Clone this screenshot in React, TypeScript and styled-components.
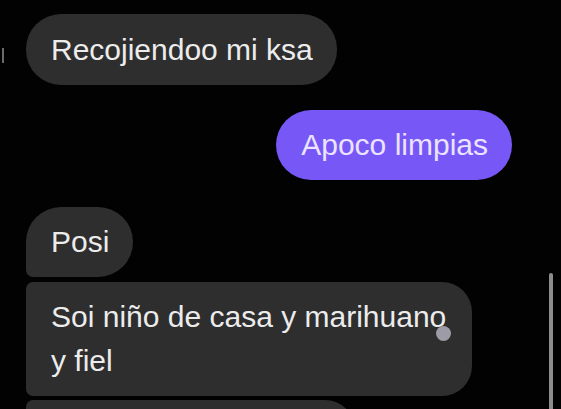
import React from "react";
import styled, { createGlobalStyle } from "styled-components";

const Global = createGlobalStyle`
  html, body { margin: 0; padding: 0; background: #000; }
  body { width: 561px; height: 409px; overflow: hidden; }
`;

const Screen = styled.div`
  position: relative;
  width: 561px;
  height: 409px;
  overflow: hidden;
  background: #020202;
  font-family: "Liberation Sans", Arial, sans-serif;
`;

const Thread = styled.div`
  display: flex;
  flex-direction: column;
  padding: 14px 49px 0 26px;
`;

type Side = "in" | "out";
type Corner = { tl?: number; tr?: number; br?: number; bl?: number };

const Row = styled.div<{ $side: Side; $gap: number }>`
  display: flex;
  justify-content: ${(p) => (p.$side === "out" ? "flex-end" : "flex-start")};
  margin-top: ${(p) => p.$gap}px;
`;

const Bubble = styled.div<{ $side: Side; $c: Corner; $w?: number }>`
  position: relative;
  box-sizing: border-box;
  max-width: 446px;
  ${(p) => (p.$w ? `width: ${p.$w}px;` : "")}
  padding: 13px 24px 13px 25px;
  font-size: 30px;
  line-height: 44px;
  background: ${(p) => (p.$side === "out" ? "#7758f6" : "#2e2e2f")};
  color: ${(p) => (p.$side === "out" ? "#ebe3ff" : "#ececec")};
  border-radius: ${(p) =>
    `${p.$c.tl ?? 35}px ${p.$c.tr ?? 35}px ${p.$c.br ?? 35}px ${p.$c.bl ?? 35}px`};
`;

const TouchDot = styled.span`
  position: absolute;
  left: 410px;
  top: 44px;
  width: 15px;
  height: 15px;
  border-radius: 50%;
  background: #9d9ca6;
`;

const EdgeMark = styled.span`
  position: absolute;
  left: 2px;
  top: 48px;
  width: 2px;
  height: 15px;
  background: #6a6a6a;
`;

const ScrollThumb = styled.span`
  position: absolute;
  left: 549px;
  top: 273px;
  width: 4px;
  height: 150px;
  border-radius: 2px;
  background: #8d8d8d;
`;

export default function App() {
  return (
    <>
      <Global />
      <Screen>
        <EdgeMark />
        <Thread>
          <Row $side="in" $gap={0}>
            <Bubble $side="in" $c={{}} style={{ paddingTop: 14 }}>
              Recojiendoo mi ksa
            </Bubble>
          </Row>
          <Row $side="out" $gap={25}>
            <Bubble $side="out" $c={{}}>
              Apoco limpias
            </Bubble>
          </Row>
          <Row $side="in" $gap={27}>
            <Bubble $side="in" $c={{ bl: 7 }}>
              Posi
            </Bubble>
          </Row>
          <Row $side="in" $gap={5}>
            <Bubble $side="in" $c={{ tl: 7, bl: 7, tr: 30, br: 30 }}>
              Soi niño de casa y marihuano y fiel
              <TouchDot />
            </Bubble>
          </Row>
          <Row $side="in" $gap={4}>
            <Bubble $side="in" $c={{ tl: 7, tr: 30 }} $w={329}>
              &nbsp;
            </Bubble>
          </Row>
        </Thread>
        <ScrollThumb />
      </Screen>
    </>
  );
}
